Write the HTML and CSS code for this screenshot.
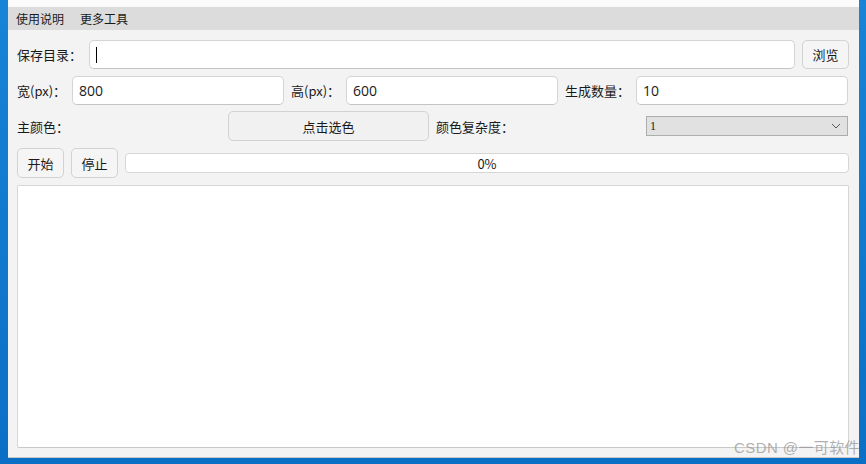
FILE: index.html
```html
<!DOCTYPE html>
<html lang="zh-CN">
<head>
    <meta charset="UTF-8">
    <title>图片生成工具</title>
    <link rel="stylesheet" href="styles.css">
</head>
<body>

<div class="window">
    <div class="title-strip"></div>
    <div class="menubar">
        <span class="menu-item">使用说明</span>
        <span class="menu-item">更多工具</span>
    </div>

    <div class="content">
        <div class="row">
            <label class="lbl lbl-dir">保存目录：</label>
            <div class="field field-dir"><span class="caret"></span></div>
            <button class="btn btn-browse">浏览</button>
        </div>

        <div class="row">
            <label class="lbl lbl-w">宽(px)：</label>
            <div class="field field-num">800</div>
            <label class="lbl lbl-h">高(px)：</label>
            <div class="field field-num">600</div>
            <label class="lbl lbl-count">生成数量：</label>
            <div class="field field-num">10</div>
        </div>

        <div class="row row-color">
            <label class="lbl lbl-color">主颜色：</label>
            <button class="btn btn-pick">点击选色</button>
            <label class="lbl lbl-complex">颜色复杂度：</label>
            <div class="select">
                <span class="select-value">1</span>
                <svg class="chevron" width="10" height="6" viewBox="0 0 10 6">
                    <path d="M1 1 L5 5 L9 1" fill="none" stroke="#555" stroke-width="1"/>
                </svg>
            </div>
        </div>

        <div class="row row-run">
            <button class="btn btn-small">开始</button>
            <button class="btn btn-small">停止</button>
            <div class="progress">0%</div>
        </div>

        <div class="log"></div>
    </div>

    <div class="watermark">CSDN @一可软件</div>
</div>

</body>
</html>
```

FILE: styles.css
```css
/* Основа: рабочий стол и окно */
body {
    margin: 0;
    padding: 0;
    width: 866px;
    height: 464px;
    overflow: hidden;
    background: linear-gradient(180deg, #1784d6 0%, #0b6fc6 100%);
    font-family: "Noto Sans CJK SC", "Noto Sans", sans-serif;
    color: #1a1a1a;
}
.window {
    position: relative;
    margin-left: 8px;
    width: 851px;
    height: 458px;
    background-color: #f3f3f3;
    border-bottom: 1px solid #c8c8c8;
    box-sizing: border-box;
    display: flex;
    flex-direction: column;
}
.title-strip {
    height: 7px;
    background-color: #fbfbfb;
}

/* Меню */
.menubar {
    height: 23px;
    background-color: #dcdcdc;
    display: flex;
    align-items: center;
    padding-left: 8px;
    gap: 16px;
    font-size: 12px;
}

/* Содержимое */
.content {
    flex: 1;
    padding: 10px 10px 9px 9px;
    display: flex;
    flex-direction: column;
    gap: 7px;
}
.row {
    display: flex;
    align-items: center;
    height: 29px;
}
.row-color {
    height: 30px;
    margin-top: -1px;
}
.row-run {
    height: 30px;
    gap: 7px;
}
.lbl {
    font-size: 13px;
    white-space: nowrap;
}
.lbl-dir { width: 72px; }
.lbl-w { width: 55px; }
.lbl-h { width: 55px; margin-left: 7px; }
.lbl-count { width: 71px; margin-left: 7px; }
.lbl-color { width: 211px; }
.lbl-complex { width: 210px; margin-left: 7px; }

.field {
    height: 29px;
    box-sizing: border-box;
    background-color: #fff;
    border: 1px solid #d4d4d4;
    border-bottom-color: #c4c4c4;
    border-radius: 5px;
    display: flex;
    align-items: center;
    padding-left: 6px;
    font-family: "Open Sans", "Noto Sans", sans-serif;
    font-size: 14px;
}
.field-dir {
    width: 706px;
}
.field-num {
    width: 212px;
}
.caret {
    width: 1px;
    height: 16px;
    background-color: #000;
}

.btn {
    box-sizing: border-box;
    background-color: #f5f5f5;
    border: 1px solid #d2d2d2;
    border-radius: 5px;
    font-family: inherit;
    font-size: 13px;
    color: #1a1a1a;
    padding: 0;
    cursor: pointer;
}
.btn-browse {
    width: 47px;
    height: 29px;
    margin-left: 7px;
}
.btn-pick {
    width: 201px;
    height: 30px;
    background-color: #f1f1f1;
}
.btn-small {
    width: 47px;
    height: 30px;
}

.select {
    width: 202px;
    height: 20px;
    box-sizing: border-box;
    background-color: #e1e1e1;
    border: 1px solid #adadad;
    display: flex;
    align-items: center;
    justify-content: space-between;
    padding: 0 6px 0 3px;
    font-family: "Liberation Serif", serif;
    font-size: 12px;
}
.progress {
    flex: 1;
    height: 20px;
    box-sizing: border-box;
    background-color: #fff;
    border: 1px solid #d6d6d6;
    border-radius: 4px;
    display: flex;
    align-items: center;
    justify-content: center;
    font-size: 13px;
}

.log {
    flex: 1;
    background-color: #fff;
    border: 1px solid #d6d6d6;
    border-bottom-color: #c8c8c8;
    border-radius: 2px;
}

/* Водяной знак поверх окна */
.watermark {
    position: absolute;
    right: -1px;
    bottom: 0;
    font-family: "Liberation Sans", "Noto Sans CJK SC", sans-serif;
    font-size: 15px;
    color: rgba(150, 150, 150, 0.75);
    letter-spacing: 0.4px;
}
```
